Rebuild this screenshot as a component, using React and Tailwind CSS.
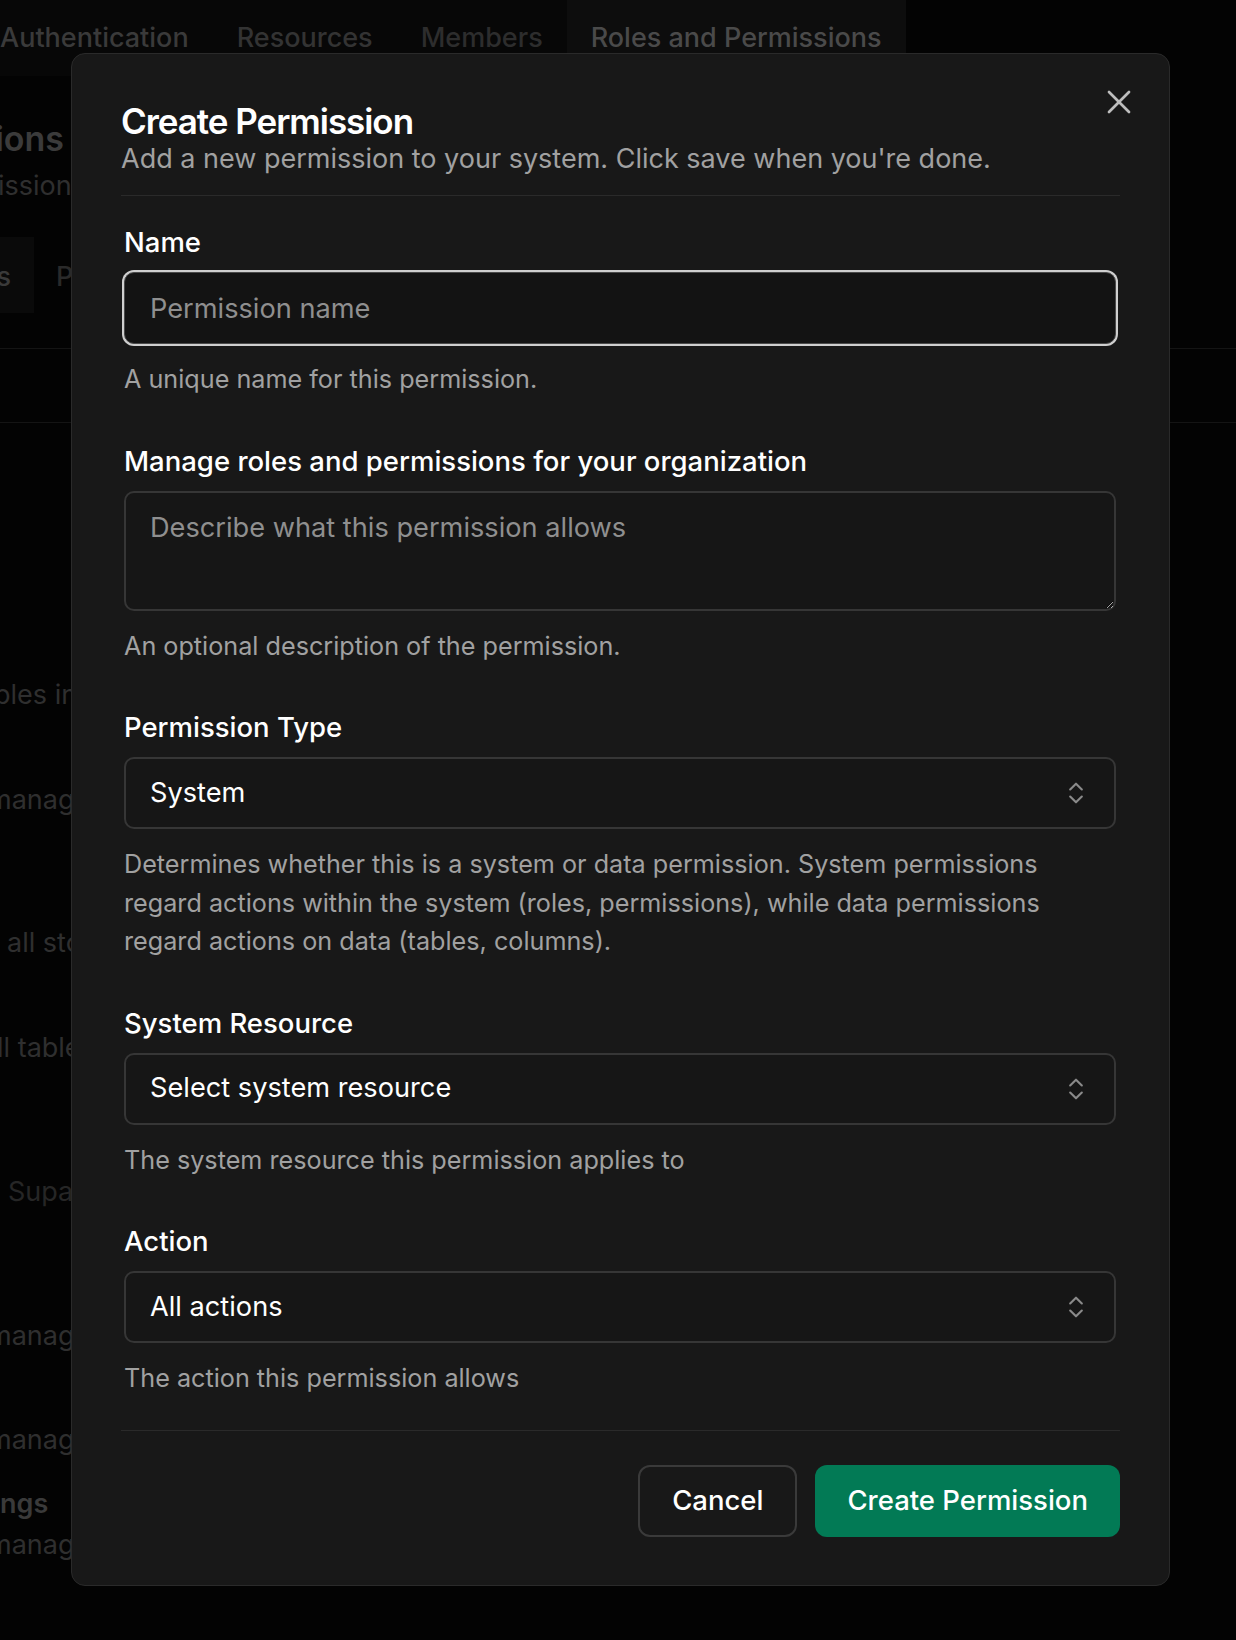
import { X, ChevronsUpDown } from "lucide-react";

const tabs = ["Authentication", "Resources", "Members", "Roles and Permissions"];

function Field({ label, hint, children }) {
  return (
    <div className="flex flex-col">
      <label className="text-[27.5px] leading-[28px] font-medium text-white">{label}</label>
      <div className="mt-[16px]">{children}</div>
      <p className="mt-[16px] text-[25.2px] leading-[38.5px] text-[#a1a1a1]">{hint}</p>
    </div>
  );
}

function SelectBox({ value }) {
  return (
    <button type="button" className="flex h-[72px] w-full items-center justify-between rounded-[10px] border-2 border-[#363636] bg-[#161616] pl-[24px] pr-[24px] text-left text-[27.2px] text-white">
      <span>{value}</span>
      <ChevronsUpDown size={28} strokeWidth={1.8} className="text-[#8a8a8a]" />
    </button>
  );
}

export default function App() {
  return (
    <div className="relative min-h-[1640px] overflow-hidden bg-[#030303] font-['Inter','Noto_Sans',sans-serif]">
      {/* page behind the dialog */}
      <div className="flex h-[76px] w-[930px] items-stretch whitespace-nowrap bg-[#070707] -ml-[24px] text-[27px] font-medium">
        {tabs.map((t, i) => (
          <div key={t} className={`flex items-center px-[24px] ${i === 3 ? "bg-[#0d0d0d] text-[#4a4a4a]" : i === 0 ? "text-[#3a3a3a]" : i === 1 ? "text-[#333333]" : "text-[#2d2d2d]"}`}>
            {t}
          </div>
        ))}
      </div>
      <div className="flex flex-col whitespace-nowrap text-[27px] text-[#2f2f2f]">
        <div className="mt-[42px] flex h-[40px] w-[64px] items-center justify-end text-[34px] font-semibold text-[#3b3b3b]">Roles and Permissions</div>
        <div className="mt-[10px] flex h-[36px] items-center -ml-[2px]">issions for your organization</div>
        <div className="mt-[33px] flex h-[76px] items-center">
          <div className="flex h-full w-[34px] items-center justify-end bg-[#0a0a0a] pr-[23px] pt-[4px] text-[#3a3a3a] font-medium">s</div>
          <div className="ml-[22px] pt-[4px] text-[#2a2a2a] font-medium">Permissions</div>
        </div>
        <div className="mt-[35px] h-px w-full bg-[#141414]" />
        <div className="mt-[73px] h-px w-full bg-[#141414]" />
        <div className="mt-[253px] flex h-[38px] items-center -ml-[6px]">bles in the organization</div>
        <div className="mt-[67px] flex h-[38px] items-center -ml-[12px]">manage</div>
        <div className="mt-[105px] flex h-[38px] items-center pl-[7px]">all storage</div>
        <div className="mt-[67px] flex h-[38px] items-center -ml-[3px]">ll tables</div>
        <div className="mt-[106px] flex h-[38px] items-center pl-[8px] text-[#262626]">Supabase</div>
        <div className="mt-[106px] flex h-[38px] items-center -ml-[12px]">manage</div>
        <div className="mt-[66px] flex h-[38px] items-center -ml-[12px]">manage</div>
        <div className="mt-[26px] flex h-[38px] items-center font-semibold text-[#3a3a3a]">ngs</div>
        <div className="mt-[3px] flex h-[38px] items-center -ml-[12px]">manage</div>
      </div>

      {/* dialog */}
      <div className="absolute left-[71px] top-[53px] w-[1099px] rounded-[14px] border border-[#2a2a2a] bg-[#181818] px-[49px] pt-[50px] pb-[48px]">
        <button type="button" className="absolute right-[30px] top-[28px] text-[#bdbdbd]">
          <X size={40} strokeWidth={1.6} />
        </button>
        <div className="border-b border-[#2a2a2a] pb-[22px]">
          <h2 className="text-[35px] leading-none font-semibold tracking-[-0.03em] text-white">Create Permission</h2>
          <p className="mt-[6px] text-[27px] leading-[28px] text-[#a1a1a1]">Add a new permission to your system. Click save when you're done.</p>
        </div>

        <form className="flex flex-col gap-[48px] pt-[32px] pl-[3px] pr-[4px]">
          <Field label="Name" hint="A unique name for this permission.">
            <input
              type="text"
              placeholder="Permission name"
              className="h-[72px] w-full rounded-[10px] border border-[#4a4a4a] bg-[#131313] px-[25px] text-[27.2px] text-white outline-none ring-2 ring-[#cfcfcf] placeholder:text-[#8f8f8f]"
            />
          </Field>
          <Field label="Manage roles and permissions for your organization" hint="An optional description of the permission.">
            <textarea
              placeholder="Describe what this permission allows"
              className="block h-[120px] w-full rounded-[10px] border-2 border-[#363636] bg-[#161616] px-[24px] py-[15px] text-[27.2px] leading-[40px] text-white outline-none [color-scheme:dark] placeholder:text-[#8f8f8f]"
            />
          </Field>
          <Field
            label="Permission Type"
            hint={
              <>
                Determines whether this is a system or data permission. System permissions
                <br />
                regard actions within the system (roles, permissions), while data permissions
                <br />
                regard actions on data (tables, columns).
              </>
            }
          >
            <SelectBox value="System" />
          </Field>
          <Field label="System Resource" hint="The system resource this permission applies to">
            <SelectBox value="Select system resource" />
          </Field>
          <Field label="Action" hint="The action this permission allows">
            <SelectBox value="All actions" />
          </Field>
        </form>

        <div className="mt-[32px] flex justify-end gap-[18px] border-t border-[#2a2a2a] pt-[34px]">
          <button type="button" className="h-[72px] rounded-[12px] border-2 border-[#3a3a3a] px-[32px] text-[27.5px] font-medium text-white">
            Cancel
          </button>
          <button type="button" className="h-[72px] rounded-[12px] bg-[#027a55] px-[32px] text-[27.5px] font-medium text-white">
            Create Permission
          </button>
        </div>
      </div>
    </div>
  );
}
